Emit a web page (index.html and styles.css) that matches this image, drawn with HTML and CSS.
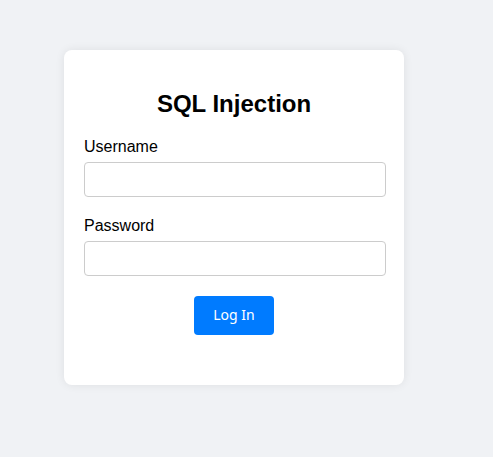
FILE: index.html
```html
<!DOCTYPE html>
<html>
<head>
<meta charset="utf-8">
<link rel="stylesheet" href="styles.css">
</head>
<body>
<div class="card">
  <h2 class="title">SQL Injection</h2>
  <form class="form">
    <div class="group">
      <label class="label" for="u">Username</label>
      <input class="input" id="u" type="text">
    </div>
    <div class="group">
      <label class="label" for="p">Password</label>
      <input class="input" id="p" type="password">
    </div>
    <div class="actions">
      <button class="btn" type="button">Log In</button>
    </div>
  </form>
</div>
</body>
</html>
```
FILE: styles.css
```css
html, body {
  margin: 0;
  padding: 0;
}
body {
  background: #f0f2f5;
  font-family: "Liberation Sans", Arial, sans-serif;
  padding: 50px 0 0 64px;
  min-height: 457px;
  box-sizing: border-box;
}
.card {
  width: 340px;
  height: 335px;
  box-sizing: border-box;
  background: #fff;
  border-radius: 8px;
  box-shadow: 0 0 10px rgba(0, 0, 0, 0.08);
  padding: 20px;
}
.title {
  margin: 20px 0 20px;
  font-size: 24px;
  line-height: 28px;
  text-align: center;
  color: #000;
}
.group {
  margin-bottom: 20px;
}
.label {
  display: block;
  font-size: 16px;
  line-height: 18px;
  margin-bottom: 6px;
  color: #000;
}
.input {
  display: block;
  width: calc(100% + 2px);
  height: 35px;
  box-sizing: border-box;
  border: 1px solid #ccc;
  border-radius: 4px;
  padding: 8px;
  margin: 0;
  font-size: 14px;
}
.actions {
  display: flex;
  justify-content: center;
}
.btn {
  background: #007bff;
  color: #fff;
  border: none;
  border-radius: 4px;
  padding: 9px 19px 11px;
  width: 80px;
  font-family: "Noto Sans", "Open Sans", sans-serif;
  font-size: 14px;
  line-height: 19px;
  height: 39px;
}
```
